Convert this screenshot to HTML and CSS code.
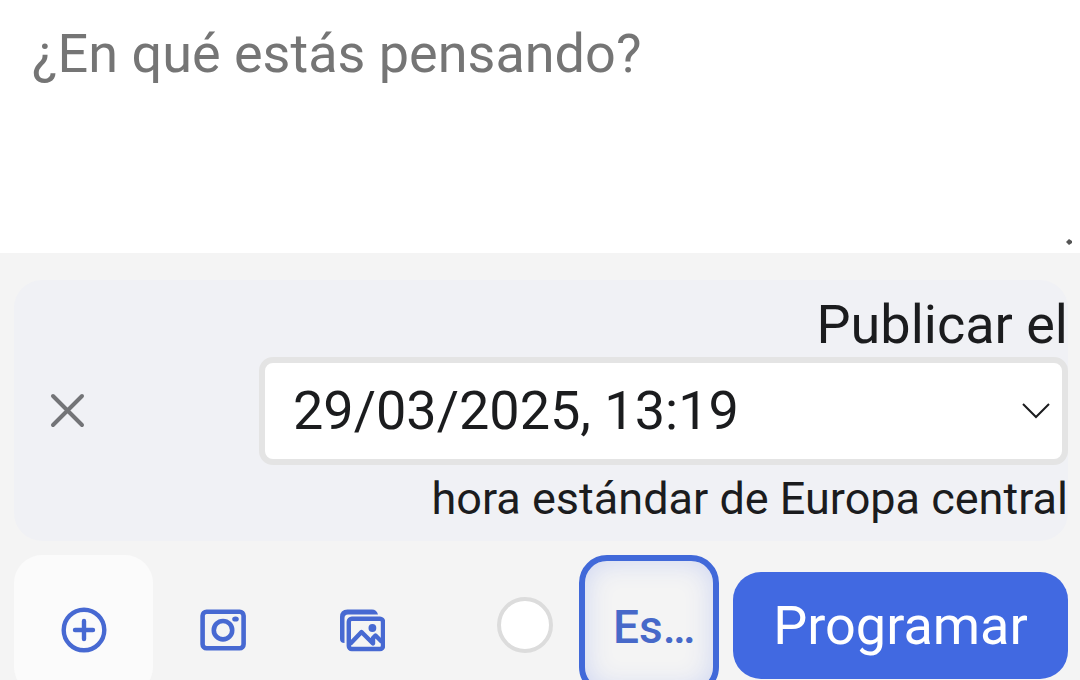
FILE: index.html
```html
<!DOCTYPE html>
<html lang="es">
<head>
    <meta charset="UTF-8">
    <meta name="viewport" content="width=device-width, initial-scale=1.0">
    <title>Programar publicación</title>
    <link rel="stylesheet" href="styles.css">
</head>
<body>

    <form class="composer">
        <div class="editor">
            <textarea class="editor-text" aria-label="Texto de la publicación" placeholder="¿En qué estás pensando?"></textarea>
            <svg class="editor-grip" viewBox="0 0 6 6" aria-hidden="true">
                <path d="M0 3L3 0L6 2V4L3 6Z" fill="#555"/>
            </svg>
        </div>

        <div class="controls">
            <div class="schedule">
                <button type="button" class="schedule-close" aria-label="Cancelar">
                    <svg viewBox="0 0 36 36" width="36" height="36">
                        <path d="M3 3L32 32M32 3L3 32" stroke="#737477" stroke-width="4" stroke-linecap="round"/>
                    </svg>
                </button>
                <div class="schedule-fields">
                    <label class="schedule-label" for="date">Publicar el</label>
                    <div class="date-field">
                        <select id="date" class="date-select">
                            <option>29/03/2025, 13:19</option>
                        </select>
                        <svg class="date-arrow" viewBox="0 0 30 16" aria-hidden="true">
                            <path d="M2 1L15 14L28 1" fill="none" stroke="#1b1c1e" stroke-width="2"/>
                        </svg>
                    </div>
                    <p class="schedule-zone">hora estándar de Europa central</p>
                </div>
            </div>

            <div class="toolbar">
                <div class="tools">
                    <button type="button" class="tool tool-active" aria-label="Añadir">
                        <svg viewBox="0 0 46 46" width="46" height="46" fill="none" stroke="#4769d2" stroke-width="4.4" stroke-linecap="round">
                            <circle cx="23" cy="23" r="20.3"/>
                            <path d="M23 14V32M14 23H32"/>
                        </svg>
                    </button>
                    <button type="button" class="tool" aria-label="Cámara">
                        <svg viewBox="0 0 46 46" width="46" height="46" fill="none" stroke="#4769d2" stroke-width="4.6">
                            <rect x="2.6" y="4.8" width="41" height="36.4" rx="4"/>
                            <circle cx="23" cy="23.2" r="9.2"/>
                            <ellipse cx="35.5" cy="12" rx="3.3" ry="2.6" fill="#4769d2" stroke="none"/>
                        </svg>
                    </button>
                    <button type="button" class="tool" aria-label="Galería">
                        <svg viewBox="0 0 46 46" width="46" height="46" fill="none" stroke="#4769d2" stroke-width="4.4" stroke-linejoin="round">
                            <path d="M1 10Q1 2.500 8.500 2.500H33Q37.500 2.500 39 7.500H9Q5.500 7.500 5.500 11V36Q1 36 1 32Z" fill="#4769d2" stroke="none"/>
                            <rect x="9.800" y="11.800" width="34.200" height="30.200" rx="3"/>
                            <circle cx="33.400" cy="21" r="3.900" fill="#4769d2" stroke="none"/>
                            <path d="M11 37L22.500 25L34 36.500V31L36.500 28.500L43 35"/>
                        </svg>
                    </button>
                </div>
                <div class="actions">
                    <svg class="counter" viewBox="0 0 56 56" width="56" height="56" aria-hidden="true">
                        <circle cx="28" cy="28" r="26" fill="#fff" stroke="#dcdcdc" stroke-width="4"/>
                    </svg>
                    <button type="button" class="language">Es…</button>
                    <button type="submit" class="submit">Programar</button>
                </div>
            </div>
        </div>
    </form>

</body>
</html>
```
FILE: styles.css
```css
* {
    box-sizing: border-box;
}
body {
    margin: 0;
    font-family: Roboto, sans-serif;
    font-size: 54px;
    color: #1b1c1e;
    background: #f4f4f4;
}
button, select, textarea {
    font: inherit;
    margin: 0;
    padding: 0;
    border: none;
    background: none;
}
button {
    cursor: pointer;
}
svg {
    display: block;
}
.composer {
    height: 100vh;
    overflow: hidden;
}
.editor {
    position: relative;
    background: #fff;
}
.editor-text {
    display: block;
    width: 100%;
    height: 253px;
    padding: 22px 32px;
    line-height: 64px;
    color: inherit;
    resize: none;
    outline: none;
}
.editor-text::placeholder {
    color: #757575;
}
.editor-grip {
    position: absolute;
    right: 8px;
    bottom: 8px;
    width: 6px;
    height: 6px;
}
.controls {
    padding: 27px 12px 0 14px;
}

/* schedule */
.schedule {
    display: flex;
    align-items: center;
    border-radius: 28px;
    background: #f0f1f5;
}
.schedule-close {
    flex: 1;
    padding: 36px;
}
.schedule-fields {
    width: 809px;
    padding: 13px 0 8px;
    text-align: right;
}
.schedule-label {
    display: block;
    line-height: 64px;
}
.date-field {
    position: relative;
}
.date-select {
    display: block;
    width: 100%;
    height: 108px;
    padding: 0 60px 2px 28px;
    border: 6px solid #e4e4e4;
    border-radius: 14px;
    background: #fff;
    color: inherit;
    appearance: none;
}
.date-arrow {
    position: absolute;
    top: 46px;
    right: 17px;
    width: 30px;
    height: 16px;
    pointer-events: none;
}
.schedule-zone {
    margin: 0;
    font-size: 45px;
    line-height: 68px;
}

/* toolbar */
.toolbar {
    display: flex;
    justify-content: space-between;
    margin-top: 14px;
}
.tools, .actions {
    display: flex;
    align-items: center;
}
.tool {
    display: flex;
    align-items: center;
    justify-content: center;
    width: 139px;
    height: 140px;
    padding-top: 10px;
    border-radius: 28px;
}
.tool-active {
    background: #fbfbfb;
}
.counter {
    margin-right: 26px;
}
.language {
    width: 140px;
    height: 140px;
    margin-right: 14px;
    padding: 4px 0 0 28px;
    border: 6px solid #4169d9;
    border-radius: 28px;
    box-shadow: inset 0 0 28px #cdd5f2;
    color: #4769c9;
    font-size: 46px;
    font-weight: 500;
    text-align: left;
}
.submit {
    width: 335px;
    height: 107px;
    border-radius: 28px;
    background: #4169e1;
    color: #fff;
}
```
